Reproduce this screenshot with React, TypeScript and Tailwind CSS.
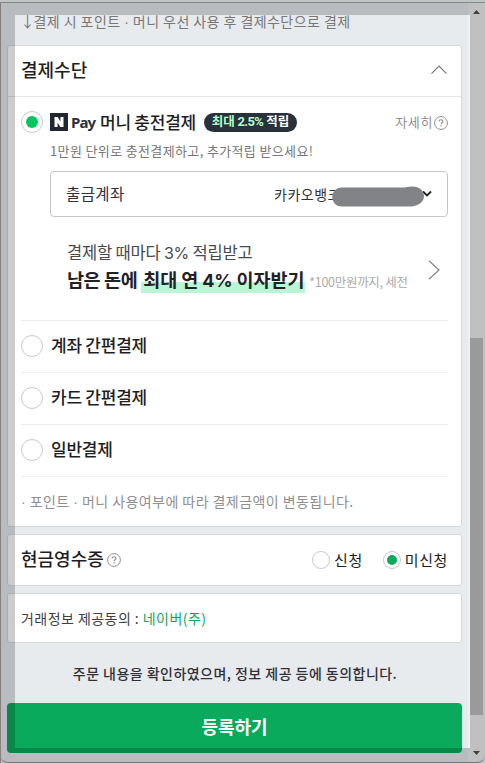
import React from 'react';

function Question({ className = '' }: { className?: string }) {
  return (
    <svg className={className} width="14" height="14" viewBox="0 0 14 14" fill="none" stroke="#8f8f8f">
      <circle cx="7" cy="7" r="6.4" />
      <path d="M5.1 5.6c0-1.1.8-1.9 1.9-1.9s1.9.7 1.9 1.7c0 1.3-1.8 1.5-1.8 2.9" strokeWidth="1.1" />
      <path d="M7.1 9.3v1.2" strokeWidth="1.2" />
    </svg>
  );
}

function Dot() {
  return <span className="font-['Liberation_Sans']">·</span>;
}

function Radio({ checked = false }: { checked?: boolean }) {
  return (
    <span className="flex size-[22px] shrink-0 items-center justify-center rounded-full border border-[#c9c9c9] bg-white">
      {checked && <span className="size-3 rounded-full bg-[#03c75a]" />}
    </span>
  );
}

function SmallRadio({ checked = false }: { checked?: boolean }) {
  return (
    <span className="flex size-[18px] shrink-0 items-center justify-center rounded-full border border-[#c9c9c9] bg-white">
      {checked && <span className="size-[10px] rounded-full bg-[#0aaa5c]" />}
    </span>
  );
}

function MethodRow({ label }: { label: string }) {
  return (
    <div className="flex h-[52px] items-center border-b border-[#ededed] pb-px">
      <Radio />
      <span className="ml-2 pb-[3px] text-[17px] leading-6 font-medium tracking-[-0.25px] text-[#1e1e23]">{label}</span>
    </div>
  );
}

export default function App() {
  return (
    <div className="relative flex h-[763px] w-[485px] overflow-hidden bg-[#e8ebee] font-['Noto_Sans_CJK_KR',sans-serif] whitespace-nowrap">
      <div className="w-px shrink-0 bg-[#a9a09e]" />
      <main className="flex w-[467px] shrink-0 flex-col pr-1.5 pl-1.5">
        <p className="mt-[11px] flex h-[34px] pl-[13px] text-[14px] leading-5 tracking-[0.44px] text-[#777]"><span className="w-[13.5px] text-[15px] tracking-normal">↓</span><span>결제 시 포인트 <Dot /> 머니 우선 사용 후 결제수단으로 결제</span></p>

        <section className="h-[482px] shrink-0 rounded-[3px] border border-[#d5d9df] bg-white">
          <div className="flex h-[51px] items-center justify-between border-b border-[#e5e5e8] pr-3.5 pb-[3px] pl-[13px]">
            <h2 className="text-[18px] font-medium text-[#1e1e23]">결제수단</h2>
            <svg width="16" height="10" viewBox="0 0 16 10" fill="none" stroke="#777" strokeWidth="1.2"><path d="M.5 8.7 8 1.2l7.5 7.5" /></svg>
          </div>

          <div className="pr-[13px] pl-[13px]">
            <div className="flex h-[50px] items-center">
              <Radio checked />
              <svg className="ml-[7px] shrink-0" width="18" height="18" viewBox="0 0 18 18"><path fill="#20272e" d="M0 0h18v18H0z" /><path fill="#fff" d="M4.5 4h3.2l2.7 4.5V4h3.1v10h-3.2L7.6 9.5V14H4.5z" /></svg>
              <span className="ml-[3px] w-[29px] font-['Noto_Sans'] text-[15px] font-bold tracking-[-0.9px] text-[#2b3138]">Pay</span>
              <span className="pb-px text-[17px] font-medium tracking-[-0.25px] text-[#1e1e23]">머니 충전결제</span>
              <span className="ml-2 flex h-[19px] w-[93px] shrink-0 items-center justify-center rounded-full bg-[#29313a] pb-px text-[12.5px] font-bold text-white"><span className="text-[#b5ffcb]">최대 <span className="font-['Roboto'] text-[13px] tracking-[-0.6px]">2.5%</span></span>&nbsp;적립</span>
              <span className="mr-px ml-auto text-[13px] tracking-[0.6px] text-[#8f8f8f]">자세히</span>
              <Question className="mt-0.5" />
            </div>
            <p className="-mt-[5px] h-[29px] pl-[29px] text-[13px] leading-[18px] tracking-[0.36px] text-[#777]">1만원 단위로 충전결제하고, 추가적립 받으세요!</p>
            <div className="relative ml-[29px] flex h-[46px] items-center rounded-[4px] border border-[#c6c6c6] pl-[15px] text-[#303038]">
              <span className="text-[15.5px] tracking-[0.4px]">출금계좌</span>
              <span className="ml-auto w-[69px] overflow-hidden text-[14px] tracking-[0.5px]">카카오뱅크</span>
              <span className="w-[79px]" />
              <svg className="mr-[15px]" width="10" height="8" viewBox="0 0 10 8" fill="none" stroke="#222" strokeWidth="1.8"><path d="m1 1.5 4 4 4-4" /></svg>
              <svg className="absolute top-[14px] left-[281px]" width="92" height="21" viewBox="0 0 92 21"><path fill="#828386" d="M10 1.5h63C86-2 92 4 92 10c0 6-5 10-14 10.5H10C-3 20.500-3 1.500 10 1.500Z" /></svg>
            </div>

            <div className="flex h-[104px] items-center border-b border-[#ededed] pr-2 pl-[46px]">
              <div className="-mt-[3px] w-[344px]">
                <p className="text-[16.5px] leading-[26px] tracking-[-0.2px] text-[#48484f]">결제할 때마다 <span className="font-['Inter'] text-[16px]">3%</span> 적립받고</p>
                <p className="flex items-baseline text-[18.5px] leading-[27px] font-bold tracking-[-0.4px] text-[#222226]">
                  남은 돈에<span className="ml-1 w-[164px] bg-[linear-gradient(transparent_16px,#b8f6d5_16px,#b8f6d5_27px,transparent_27px)] px-0.5 tracking-[-0.1px]">최대 연 <span className="font-['Inter'] text-[18px]">4%</span> 이자받기</span>
                  <span className="ml-1 text-[12.5px] font-normal tracking-[-0.3px] text-[#aaa]">*100만원까지, 세전</span>
                </p>
              </div>
              <svg className="mt-0.5 ml-auto shrink-0" width="12" height="20" viewBox="0 0 12 20" fill="none" stroke="#8a8a8a" strokeWidth="1.3"><path d="m1 .7 10 9.3-10 9.3" /></svg>
            </div>

            <MethodRow label="계좌 간편결제" />
            <MethodRow label="카드 간편결제" />
            <MethodRow label="일반결제" />
            <p className="text-[14px] leading-[48px] tracking-[0.44px] text-[#8f8f8f]"><Dot /> 포인트 <Dot /> 머니 사용여부에 따라 결제금액이 변동됩니다.</p>
          </div>
        </section>

        <section className="mt-[7px] flex h-[52px] shrink-0 items-center rounded-[3px] border border-[#d5d9df] bg-white pr-[13px] pl-[13px]">
          <h2 className="pb-1 text-[18px] font-medium text-[#1e1e23]">현금영수증</h2>
          <Question className="ml-[3px]" />
          <span className="ml-auto flex items-center gap-1 text-[15px] tracking-[0.6px] text-[#1e1e23]"><SmallRadio />신청</span>
          <span className="ml-[20px] flex items-center gap-1 text-[15px] tracking-[0.6px] text-[#1e1e23]"><SmallRadio checked />미신청</span>
        </section>

        <section className="mt-[7px] flex h-[50px] shrink-0 items-center rounded-[3px] border border-[#d5d9df] bg-white pl-[13px] text-[14px] tracking-[0.45px] text-[#404048]">
          거래정보 제공동의 :&nbsp;<span className="text-[#0aaa5c]">네이버(주)</span>
        </section>

        <p className="h-[60px] pl-px text-center text-[14px] leading-[60px] font-medium tracking-[0.46px] text-[#303038]">주문 내용을 확인하였으며, 정보 제공 등에 동의합니다.</p>
        <button className="h-[50px] shrink-0 rounded-[4px] bg-[#0aaa5c] pb-[3px] text-[18px] font-bold text-white">등록하기</button>
      </main>

      <aside className="flex w-[17px] shrink-0 flex-col items-center bg-[#f1f1f1]">
        <svg className="mt-[10px]" width="7" height="4" viewBox="0 0 7 4"><path fill="#505050" d="M3.5 0 7 4H0z" /></svg>
        <div className="mt-[324px] h-[377px] w-[13px] bg-[#c1c1c1]" />
        <svg className="mt-auto mb-2" width="7" height="4" viewBox="0 0 7 4"><path fill="#505050" d="M0 0h7L3.5 4z" /></svg>
      </aside>

      <div className="pointer-events-none absolute inset-0 border-[15px] border-black/20" />
      <div className="pointer-events-none absolute inset-x-0 top-0 h-[3px] border-b border-[#858887] bg-[#c0c4c4]" />
      <div className="pointer-events-none absolute inset-x-0 bottom-0 h-[11px] rounded-b-lg border-b border-[#777]" />
    </div>
  );
}
